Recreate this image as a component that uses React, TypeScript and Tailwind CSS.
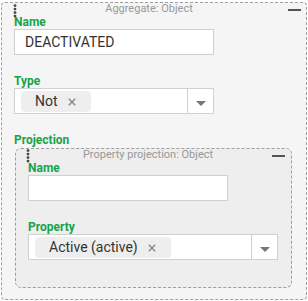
import { type ReactNode } from "react";

const font = { fontFamily: "Roboto, 'Liberation Sans', sans-serif" };

function DragDots() {
  return (
    <svg width="4" height="14" viewBox="0 0 4 14" className="block">
      <circle cx="2" cy="1.6" r="1.4" fill="#444" />
      <circle cx="2" cy="5.1" r="1.4" fill="#444" />
      <circle cx="2" cy="8.6" r="1.4" fill="#444" />
      <circle cx="2" cy="12.1" r="1.4" fill="#444" />
    </svg>
  );
}

function Header({ title }: { title: string }) {
  return (
    <div className="flex h-[12px] items-start">
      <div className="flex-1 text-center text-[11px] leading-[12px] text-[#999]">{title}</div>
      <div className="ml-[4px] mt-[6px] h-[2px] w-[13px] bg-[#555]" />
    </div>
  );
}

function Label({ children, className = "" }: { children: ReactNode; className?: string }) {
  return (
    <div className={"text-[12px] font-bold leading-[14px] text-[#17a34a] " + className}>{children}</div>
  );
}

function TextInput({ value, width }: { value: string; width: string }) {
  return (
    <div className={"flex h-[26px] items-center border border-[#d0d0d0] bg-white pl-[10px] text-[14px] text-[#333] " + width}>
      {value}
    </div>
  );
}

function Chip({ text }: { text: string }) {
  return (
    <div className="flex h-[21px] items-center rounded-[4px] bg-[#eeeeee] pl-[14px] pr-[15px] text-[14px] text-[#333]">
      <span>{text}</span>
      <svg width="8" height="8" viewBox="0 0 8 8" className="ml-[10px]">
        <path d="M0.8 0.8 L7.2 7.2 M7.2 0.8 L0.8 7.2" stroke="#888" strokeWidth="1.4" />
      </svg>
    </div>
  );
}

function Select({ chip, width }: { chip: string; width: string }) {
  return (
    <div className={"flex h-[26px] border border-[#d0d0d0] bg-white " + width}>
      <div className="flex flex-1 items-start pl-[6px] pt-[2px]">
        <Chip text={chip} />
      </div>
      <div className="flex w-[26px] items-center justify-center border-l border-[#d0d0d0]">
        <svg width="10" height="5" viewBox="0 0 10 5" className="mt-[4px]">
          <path d="M0 0 L10 0 L5 5 Z" fill="#777" />
        </svg>
      </div>
    </div>
  );
}

export default function App() {
  return (
    <div className="h-[301px] w-[308px] bg-white pl-[1px] pt-[2px]" style={font}>
      <div className="relative h-[298px] w-[306px] rounded-[4px] border border-dashed border-[#9e9e9e] bg-[#f5f5f5] pl-[12px] pr-[5px]">
        <div className="absolute left-[11px] top-[1px]">
          <DragDots />
        </div>
        <Header title="Aggregate: Object" />
        <Label>Name</Label>
        <TextInput value="DEACTIVATED" width="w-[200px]" />

        <Label className="mt-[19px]">Type</Label>
        <Select chip="Not" width="w-[200px]" />

        <Label className="mt-[19px]">Projection</Label>
        <div className="relative ml-[1px] mt-[1px] w-[277px] rounded-[6px] border border-dashed border-[#9e9e9e] bg-[#eeeeee] pb-[27px] pl-[12px] pr-[6px]">
          <div className="absolute left-[10px] top-[0px]">
            <DragDots />
          </div>
          <Header title="Property projection: Object" />
          <Label>Name</Label>
          <TextInput value="" width="w-[200px]" />

          <Label className="mt-[19px]">Property</Label>
          <Select chip="Active (active)" width="w-[250px]" />
        </div>
      </div>
    </div>
  );
}
